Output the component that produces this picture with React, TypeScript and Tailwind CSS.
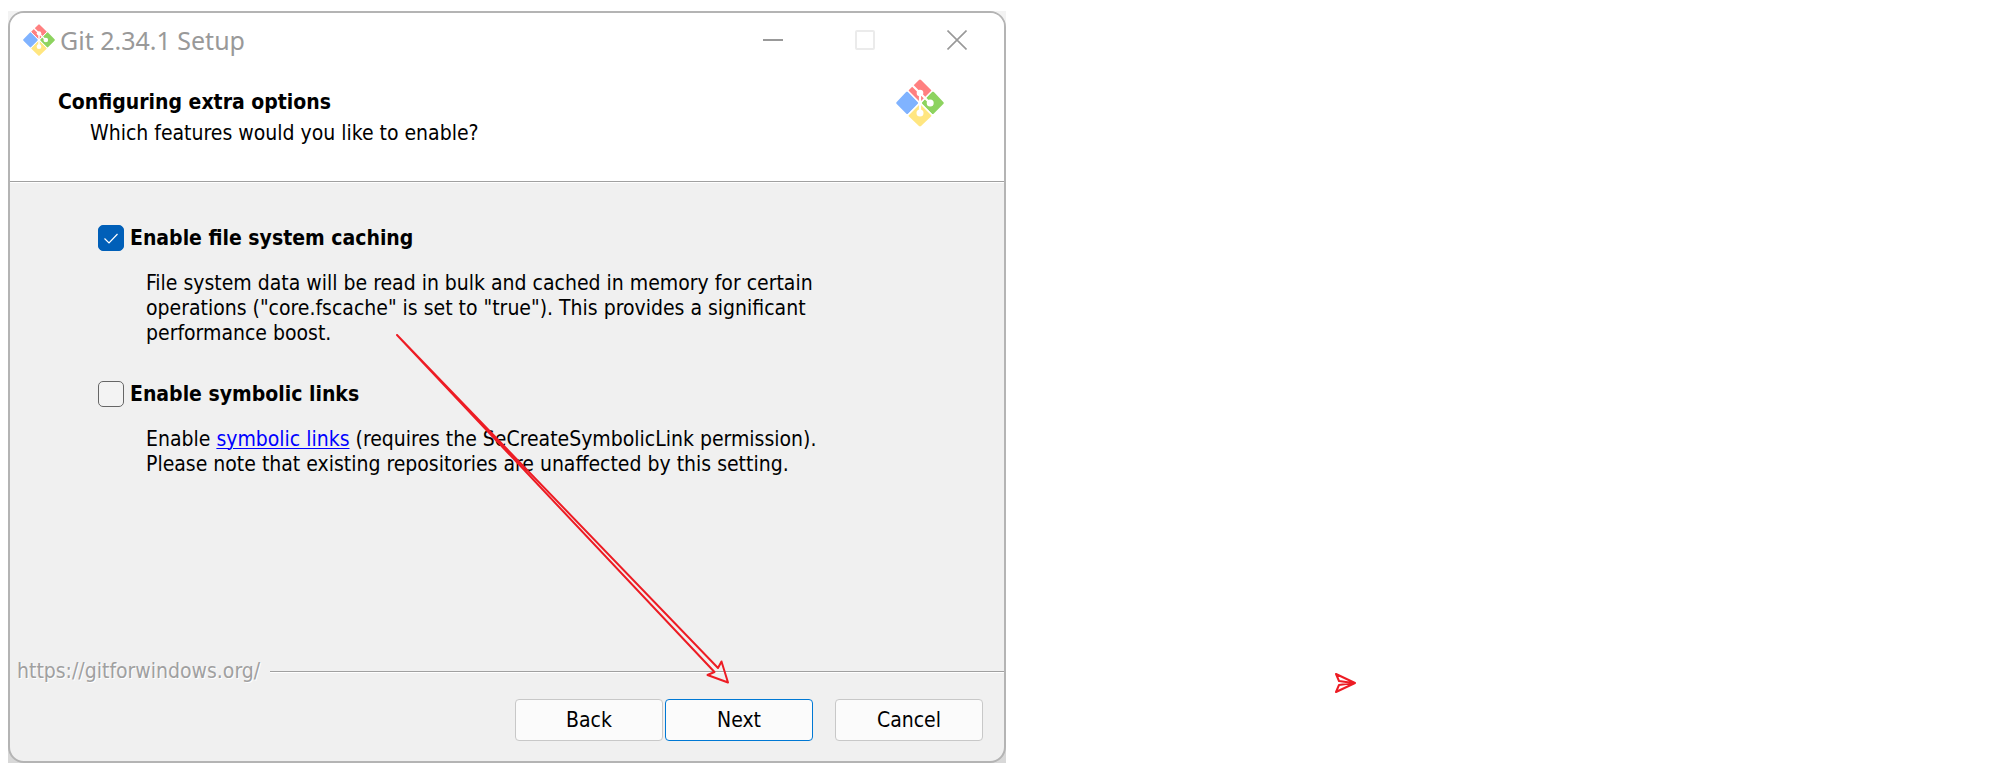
import React from "react";

function GitLogo({ className }: { className: string }) {
  return (
    <svg viewBox="0 0 48 48" className={className} aria-hidden="true">
      <g strokeWidth="3" strokeLinejoin="round">
        <path d="M24 2 L34 12 L24 22 L14 12Z" fill="#ff8080" stroke="#ff8080" />
        <path d="M11.2 14 L20.5 24 L11.2 33.5 L1.8 24Z" fill="#80b3ff" stroke="#80b3ff" />
        <path d="M36.8 14 L46.2 24 L36.8 33.5 L27.5 24Z" fill="#8dd35f" stroke="#8dd35f" />
        <path d="M24 26.5 L34 36.5 L24 46 L14 36.5Z" fill="#ffe680" stroke="#ffe680" />
      </g>
      <g stroke="#fff" fill="none">
        <path d="M15.5 5.5 L24 14 L34 24" strokeWidth="2.2" />
        <path d="M24 14 V34" strokeWidth="2.2" />
        <path d="M11 11 L37 37 M37 11 L11 37" strokeWidth="1.4" />
      </g>
      <g fill="#fff">
        <circle cx="24" cy="14" r="3.3" />
        <circle cx="34.2" cy="24" r="3.5" />
        <circle cx="24" cy="34" r="3.5" />
      </g>
    </svg>
  );
}

function TitleBar() {
  const control = "flex h-full w-[92px] items-center justify-center";
  return (
    <div className="flex h-[54px] items-center bg-white pl-[13px] pr-px">
      <GitLogo className="size-8" />
      <h1 className="ml-[5px] flex-1 font-['Noto_Sans',sans-serif] text-[25px] text-[#999]">
        Git 2.34.1 Setup
      </h1>
      <button type="button" aria-label="Minimize" className={control}>
        <svg viewBox="0 0 20 20" className="size-5">
          <path d="M0 10H20" stroke="#999" strokeWidth="2" />
        </svg>
      </button>
      <button type="button" aria-label="Maximize" disabled className={control}>
        <svg viewBox="0 0 20 20" className="size-5">
          <rect x="1" y="1" width="18" height="18" rx="1" fill="none" stroke="#ebebeb" strokeWidth="2" />
        </svg>
      </button>
      <button type="button" aria-label="Close" className={control}>
        <svg viewBox="0 0 20 20" className="size-5">
          <path d="M0.5 0.5L19.5 19.5M19.5 0.5L0.5 19.5" stroke="#999" strokeWidth="1.6" />
        </svg>
      </button>
    </div>
  );
}

function Option({
  id,
  label,
  checked,
  children,
}: {
  id: string;
  label: string;
  checked?: boolean;
  children: React.ReactNode;
}) {
  return (
    <section>
      <div className="flex h-[26px] items-center gap-[6px]">
        <span className="grid size-[26px] shrink-0">
          <input
            id={id}
            type="checkbox"
            defaultChecked={checked}
            className="peer col-start-1 row-start-1 size-[26px] appearance-none rounded-[5px] border border-[#666] bg-[#f3f3f3] checked:border-[#005fb8] checked:bg-[#005fb8]"
          />
          <svg
            viewBox="0 0 26 26"
            className="pointer-events-none invisible col-start-1 row-start-1 size-[26px] peer-checked:visible"
          >
            <path d="M6.5 13.5L11 18L19.5 9" fill="none" stroke="#fff" strokeWidth="1.2" />
          </svg>
        </span>
        <label htmlFor={id} className="font-bold">
          {label}
        </label>
      </div>
      <p className="mt-5 pl-12">{children}</p>
    </section>
  );
}

function DialogButton({ label, primary }: { label: string; primary?: boolean }) {
  return (
    <button
      type="button"
      className={
        primary
          ? "h-[42px] w-[148px] rounded-[4px] border border-[#0078d4] bg-[#fbfbfb]"
          : "h-[42px] w-[148px] rounded-[4px] border border-[#c8c8c8] bg-[#fbfbfb]"
      }
    >
      {label}
    </button>
  );
}

function Annotations() {
  return (
    <svg
      width="1400"
      height="779"
      viewBox="0 0 1400 779"
      className="pointer-events-none absolute left-0 top-0"
      fill="none"
      stroke="#ed1c24"
      strokeWidth="2"
      strokeLinejoin="round"
      aria-hidden="true"
    >
      <path d="M397 335L718 668L721.5 661.5L728 682.5L707.5 675L714.5 672Z" />
      <path d="M1336 674L1355 683L1336 692L1339 685L1353 683L1339 681Z" />
    </svg>
  );
}

export default function App() {
  return (
    <main className="relative overflow-hidden bg-white pb-4 pl-2 pt-[11px] font-['DejaVu_Sans_Condensed','DejaVu_Sans',sans-serif] text-[21px] leading-[25px] text-black">
      <div className="max-w-[998px] bg-linear-to-b from-[#f3f3f3] to-[#d8d8d8]">
        <div className="overflow-hidden rounded-2xl border-2 border-[#b4b4b4] bg-[#f0f0f0]">
          <TitleBar />
          <header className="flex items-start justify-between border-b border-[#a0a0a0] bg-white pb-[35px] pl-12 pr-[60px]">
            <div className="pt-[23px]">
              <h2 className="font-bold">Configuring extra options</h2>
              <p className="mt-[6px] pl-8">Which features would you like to enable?</p>
            </div>
            <GitLogo className="mt-3 size-12" />
          </header>
          <div className="flex flex-col gap-[35px] border-t border-white px-[88px] pb-[182px] pt-[42px]">
            <Option id="fscache" label="Enable file system caching" checked>
              File system data will be read in bulk and cached in memory for certain
              <br />
              operations ("core.fscache" is set to "true"). This provides a significant
              <br />
              performance boost.
            </Option>
            <Option id="symlinks" label="Enable symbolic links">
              Enable{" "}
              <a
                href="#symbolic-links"
                className="text-[#0000ff] underline decoration-1 underline-offset-2"
              >
                symbolic links
              </a>{" "}
              (requires the SeCreateSymbolicLink permission).
              <br />
              Please note that existing repositories are unaffected by this setting.
            </Option>
          </div>
          <footer>
            <div className="flex items-center gap-[10px] pl-[7px]">
              <span className="text-[#a0a0a0] [text-shadow:1px_1px_0_#fff]">
                https://gitforwindows.org/
              </span>
              <span className="h-[2px] flex-1 border-b border-t border-b-white border-t-[#a0a0a0]" />
            </div>
            <div className="flex justify-end gap-[2px] pb-5 pr-[21px] pt-[15px]">
              <DialogButton label="Back" />
              <DialogButton label="Next" primary />
              <div className="ml-5 flex">
                <DialogButton label="Cancel" />
              </div>
            </div>
          </footer>
        </div>
      </div>
      <Annotations />
    </main>
  );
}
